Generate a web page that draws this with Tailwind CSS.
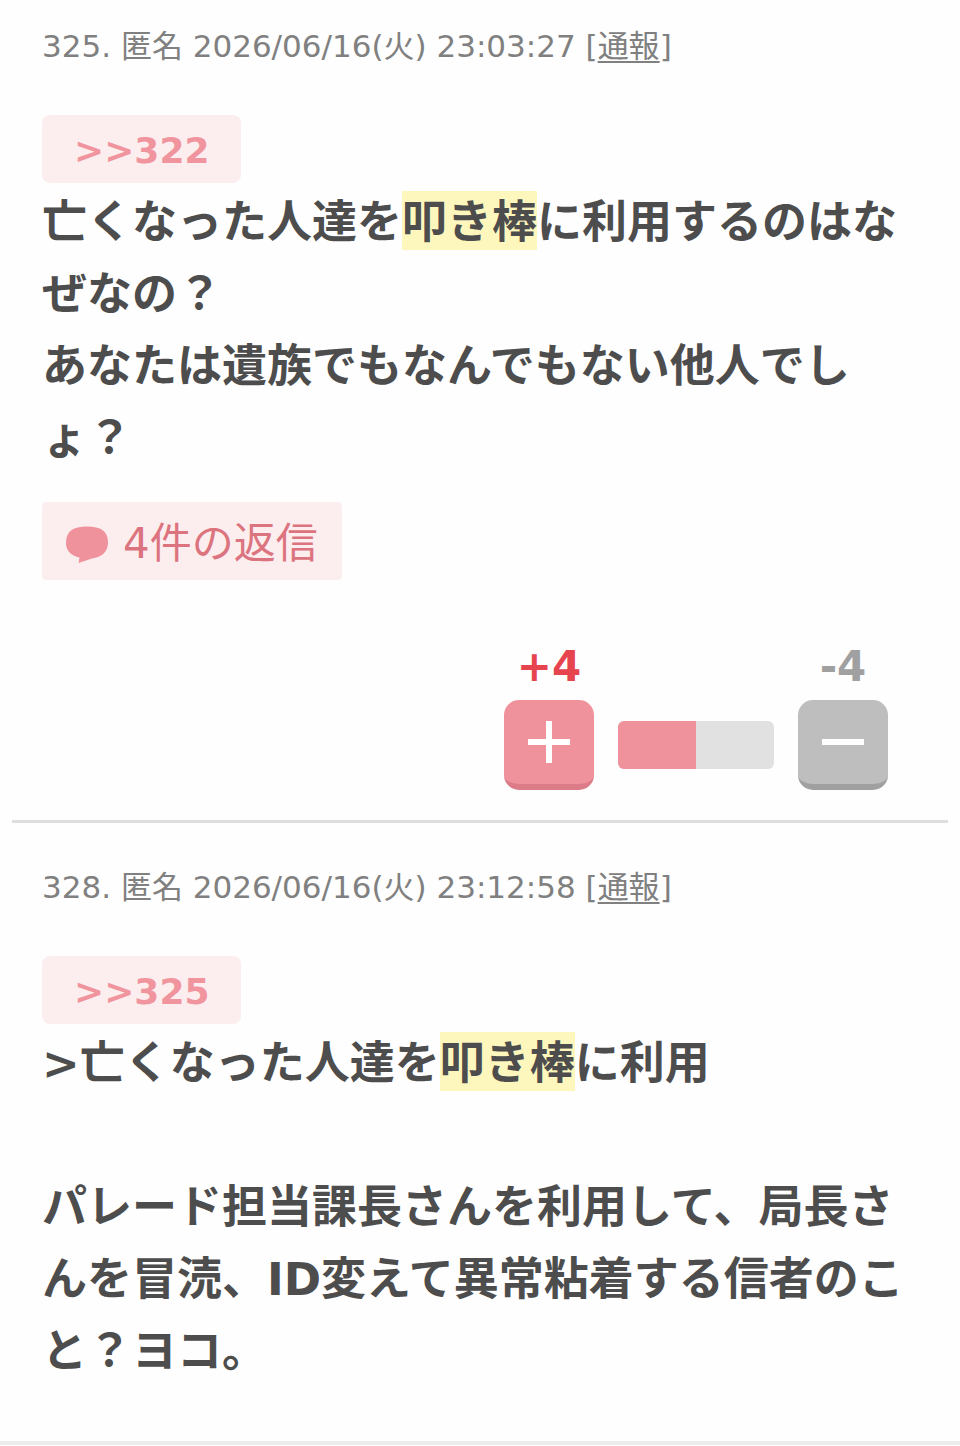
<!DOCTYPE html>
<html lang="ja">

<head>
    <meta charset="UTF-8">
    <meta name="viewport" content="width=device-width, initial-scale=1.0">
    <script src="https://cdn.jsdelivr.net/npm/@tailwindcss/browser@4"></script>
    <title>コメント一覧</title>
</head>

<body class="bg-[#fefefe] text-[#4d4d4d] font-['DejaVu_Sans','Noto_Sans_CJK_JP',sans-serif]">
    <main>
        <article class="px-3 pt-6">
            <div class="px-[30px]">
                <header class="text-[31px] leading-[44px] text-[#808080]">
                    325. 匿名 2026/06/16(火) 23:03:27 [<a href="#report-325" class="underline underline-offset-4 decoration-2">通報</a>]
                </header>
                <a href="#comment-322"
                    class="block w-max mt-[47px] px-8 pt-1 rounded-lg bg-[#fceeef] text-[#f0949e] text-4xl leading-[64px] font-bold">&gt;&gt;322</a>
                <p class="mt-1 text-[45px] leading-[72px] font-bold">亡くなった人達を<mark
                        class="bg-[#fdf7bd] text-inherit pt-[5px] pb-px">叩き棒</mark>に利用するのはなぜなの？<br>あなたは遺族でもなんでもない他人でしょ？</p>
                <button type="button"
                    class="flex items-center h-[78px] mt-[27px] pt-1 px-6 gap-[15px] rounded-sm bg-[#fceeef] text-[#dc7480] text-[42px] cursor-pointer">
                    <svg viewBox="0 0 42 38" class="w-[42px] h-[38px] mt-1" fill="#f0929c" aria-hidden="true">
                        <path d="M21 0.500C35 0.500 42 5 42 16.500C42 26 36 31 26 32.500L12.500 37L13.500 31.500C5 29.500 0 25 0 17C0 5 7 0.500 21 0.500Z" />
                    </svg>
                    4件の返信
                </button>
                <div class="flex justify-end items-end gap-6 mt-[66px] pr-[30px]">
                    <div class="flex flex-col items-center gap-3 w-[90px]">
                        <span class="text-[42px] leading-[42px] font-bold text-[#e6454f]">+4</span>
                        <button type="button" aria-label="プラス"
                            class="flex justify-center items-center w-full h-[90px] rounded-[15px] bg-[#f0929c] border-b-6 border-[#dc7c88] cursor-pointer">
                            <svg viewBox="0 0 42 42" class="size-[42px]" stroke="#fff" stroke-width="6" aria-hidden="true">
                                <path d="M0 21H42M21 0V42" />
                            </svg>
                        </button>
                    </div>
                    <div class="flex w-[156px] h-12 mb-[21px] rounded-md overflow-hidden bg-[#e1e1e1]">
                        <div class="bg-[#f0929c]" style="width: 50%"></div>
                    </div>
                    <div class="flex flex-col items-center gap-3 w-[90px]">
                        <span class="text-[42px] leading-[42px] font-bold text-[#a0a0a0]">-4</span>
                        <button type="button" aria-label="マイナス"
                            class="flex justify-center items-center w-full h-[90px] rounded-[15px] bg-[#bebebe] border-b-6 border-[#a0a0a0] cursor-pointer">
                            <svg viewBox="0 0 42 42" class="size-[42px]" stroke="#fff" stroke-width="6" aria-hidden="true">
                                <path d="M0 21H42" />
                            </svg>
                        </button>
                    </div>
                </div>
            </div>
            <hr class="mt-[30px] border-t-3 border-[#dedede]">
        </article>

        <article class="px-3 pt-[42px] pb-[53px]">
            <div class="px-[30px]">
                <header class="text-[31px] leading-[44px] text-[#808080]">
                    328. 匿名 2026/06/16(火) 23:12:58 [<a href="#report-328" class="underline underline-offset-4 decoration-2">通報</a>]
                </header>
                <a href="#comment-325"
                    class="block w-max mt-[47px] px-8 pt-1 rounded-lg bg-[#fceeef] text-[#f0949e] text-4xl leading-[64px] font-bold">&gt;&gt;325</a>
                <p class="mt-1 text-[45px] leading-[72px] font-bold">&gt;亡くなった人達を<mark
                        class="bg-[#fdf7bd] text-inherit pt-[5px] pb-px">叩き棒</mark>に利用<br><br>パレード担当課長さんを利用して、局長さんを冒涜、ID変えて異常粘着する信者のこと？ヨコ。</p>
            </div>
        </article>
    </main>
    <div class="h-1 bg-[#ececec]"></div>
</body>

</html>
